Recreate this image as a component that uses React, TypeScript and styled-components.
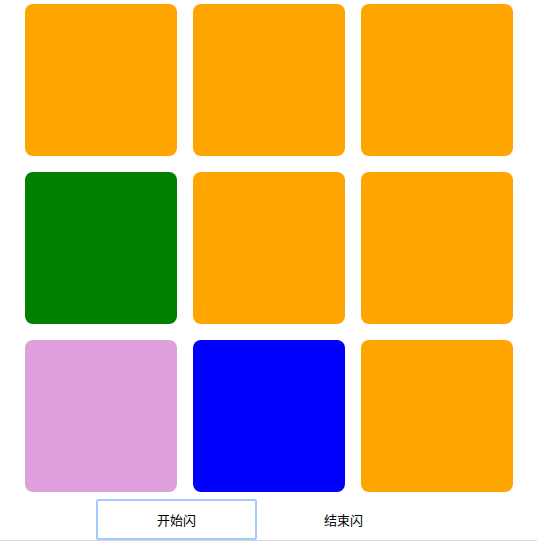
import React, { useState } from 'react';
import styled, { createGlobalStyle } from 'styled-components';

const GlobalStyle = createGlobalStyle`
  html, body {
    margin: 0;
    padding: 0;
    background: #ffffff;
    font-family: "Noto Sans CJK SC", "Noto Sans", sans-serif;
  }
`;

const Page = styled.div`
  width: 537px;
  display: flex;
  flex-direction: column;
  align-items: center;
  padding-top: 4px;
`;

const Grid = styled.div`
  display: grid;
  grid-template-columns: repeat(3, 152px);
  grid-auto-rows: 152px;
  gap: 16px;
`;

const Cell = styled.div<{ color: string }>`
  background: ${props => props.color};
  border-radius: 8px;
`;

const Controls = styled.div`
  align-self: stretch;
  display: flex;
  gap: 6px;
  padding: 7px 0 0 96px;
  border-bottom: 1px solid #d9d9d9;
`;

const Button = styled.button<{ active: boolean }>`
  width: 161px;
  height: 41px;
  box-sizing: border-box;
  background: #ffffff;
  border: 2px solid ${props => (props.active ? '#a6c8ff' : 'transparent')};
  border-radius: 2px;
  font-family: "Noto Sans CJK SC", sans-serif;
  font-size: 13px;
  color: #000000;
  cursor: pointer;
  outline: none;
`;

const colors = [
  'orange', 'orange', 'orange',
  'green', 'orange', 'orange',
  'plum', 'blue', 'orange',
];

const App: React.FC = () => {
  const [focused, setFocused] = useState(0);

  return (
    <Page>
      <GlobalStyle />
      <Grid>
        {colors.map((c, i) => (
          <Cell key={i} color={c} />
        ))}
      </Grid>
      <Controls>
        <Button active={focused === 0} onClick={() => setFocused(0)}>开始闪</Button>
        <Button active={focused === 1} onClick={() => setFocused(1)}>结束闪</Button>
      </Controls>
    </Page>
  );
};

export default App;
